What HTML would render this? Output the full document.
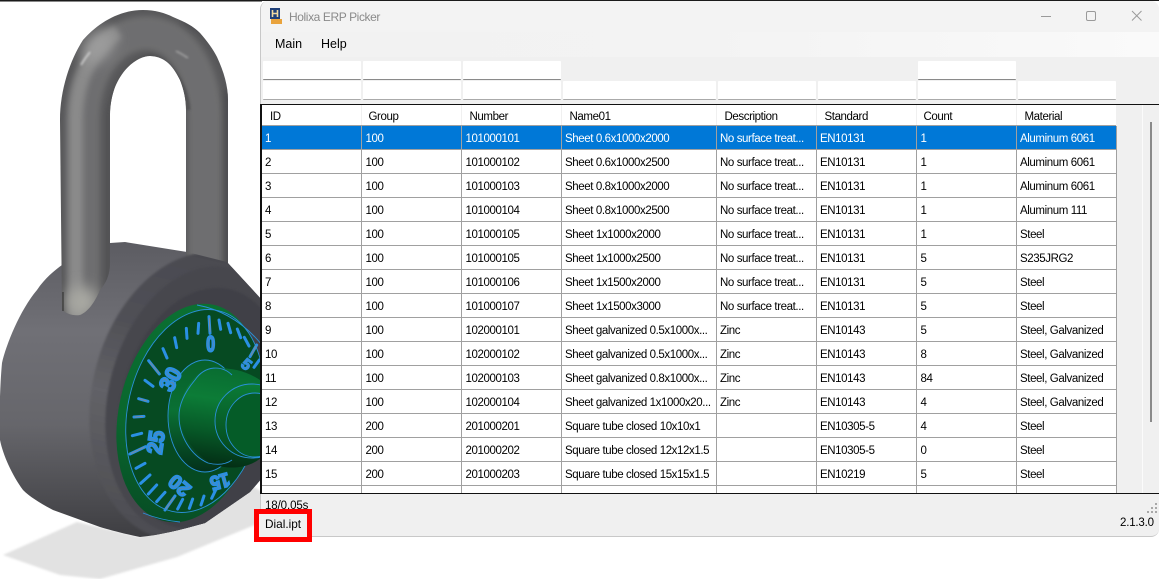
<!DOCTYPE html>
<html><head><meta charset="utf-8">
<style>
html,body{margin:0;padding:0;background:#fff}
#p{position:relative;width:1159px;height:579px;overflow:hidden;background:#fff;font-family:"Liberation Sans",sans-serif;font-size:12px;color:#000}
.a{position:absolute}
.f{position:absolute;background:#fff;height:18px;border-bottom:1px solid #8a8a8a;border-radius:1px}
.f2{border-bottom-color:#aaa}
table{position:absolute;left:261px;top:105px;width:855px;border-collapse:collapse;table-layout:fixed;font-size:11.5px;letter-spacing:-.4px}
td,th{height:21px;padding:2px 0 0 4px;border-right:1px solid #a0a0a0;border-bottom:1px solid #a0a0a0;white-space:nowrap;overflow:hidden;text-align:left;font-weight:normal;box-sizing:content-box}
td:nth-child(4),td:nth-child(5),td:nth-child(6){padding-left:3.5px}
td:nth-child(8){padding-left:3.5px}
th{height:16px;padding-top:4px;border-color:#f0f0f0;border-bottom-color:#a0a0a0}
tr.s td{background:#0078d7;color:#fff}
</style></head><body><div id="p">
<svg class="a" style="left:0;top:0" width="262" height="579" viewBox="0 0 262 579">
<defs>
<clipPath id="sc"><path d="M62,310 L60,120 C60,90 70,60 83,40 C97,24 118,10 143,10 C155,10 165,13 173,17 C185,22 193,26 200,33 C207,41 213,49 217,57 C224,72 228,86 228,100 L228,270 L186,270 L186,110 C186,100 184,90 180,80 C176,72 172,66 167,62 C162,58 156,56 150,56 C143,56 135,60 128,67 C122,73 118,80 115,87 C112,95 110,105 110,115 L110,262 C110,275 106,283 100,290 C95,302 88,312 80,315 C73,316 67,314 62,310 Z"/></clipPath>
<clipPath id="bc"><path d="M37,290 C45,278 55,270 62,265 L110,243 L125,242 L187,252 L227,262 L262,300 L262,478 L250,492 L205,523 C180,530 160,535 140,537 C125,534 110,530 100,527 L53,510 C40,503 30,497 23,490 C12,475 3,455 0,440 C-1,415 0,385 2,363 C6,345 20,310 37,290 Z"/></clipPath>
<linearGradient id="bd" x1="0" x2="0" y1="0" y2="1"><stop offset="0" stop-color="#5c5c62"/><stop offset=".3" stop-color="#707076"/><stop offset=".62" stop-color="#66666b"/><stop offset="1" stop-color="#3e3e42"/></linearGradient>
<linearGradient id="rm" x1="0" x2="0" y1="0" y2="1"><stop offset="0" stop-color="#4a4a50"/><stop offset=".3" stop-color="#505056"/><stop offset=".55" stop-color="#626267"/><stop offset="1" stop-color="#4c4c51"/></linearGradient>
<linearGradient id="gr" x1="0" x2="0" y1="0" y2="1"><stop offset="0" stop-color="#0b7032"/><stop offset=".6" stop-color="#0a672e"/><stop offset="1" stop-color="#074e25"/></linearGradient>
<linearGradient id="ha" x1="0" x2="0" y1="0" y2="1"><stop offset="0" stop-color="#07602b"/><stop offset=".45" stop-color="#0a7034"/><stop offset="1" stop-color="#03301a"/></linearGradient>
<linearGradient id="hb" gradientUnits="userSpaceOnUse" x1="240" y1="365" x2="225" y2="470"><stop offset="0" stop-color="#086a30"/><stop offset=".35" stop-color="#0c7c37"/><stop offset=".65" stop-color="#075a28"/><stop offset="1" stop-color="#032a13"/></linearGradient>
<linearGradient id="hc" gradientUnits="userSpaceOnUse" x1="250" y1="383" x2="245" y2="460"><stop offset="0" stop-color="#0b7c37"/><stop offset="1" stop-color="#04461e"/></linearGradient>
<filter id="b1" x="-20%" y="-20%" width="140%" height="140%"><feGaussianBlur stdDeviation="1"/></filter>
<filter id="b3" x="-30%" y="-30%" width="160%" height="160%"><feGaussianBlur stdDeviation="3"/></filter>
<filter id="b6" x="-60%" y="-60%" width="220%" height="220%"><feGaussianBlur stdDeviation="7"/></filter>
</defs>
<!-- shadow -->
<path d="M3,555 L77,522 L140,537 L243,480 L262,492 L262,522 L177,557 L100,579 L60,575 Z" fill="#e2e2e2" filter="url(#b1)"/>
<!-- body back -->
<path d="M37,290 C45,278 55,270 62,265 L110,243 L125,242 L187,252 L227,262 L262,300 L262,478 L250,492 L205,523 C180,530 160,535 140,537 C125,534 110,530 100,527 L53,510 C40,503 30,497 23,490 C12,475 3,455 0,440 C-1,415 0,385 2,363 C6,345 20,310 37,290 Z" fill="url(#bd)"/>
<!-- shackle -->
<g clip-path="url(#sc)">
<rect x="50" y="0" width="190" height="330" fill="#58585a"/>
<path d="M83,330 L83,120 C83,70 112,33 146,33 C180,33 205,70 205,120 L205,280" fill="none" stroke="#6e6e6f" stroke-width="34" filter="url(#b3)"/>
<path d="M76,330 L76,120 C76,80 92,50 118,32" fill="none" stroke="#8a8a8a" stroke-width="14" filter="url(#b3)"/>
<ellipse cx="98" cy="46" rx="20" ry="13" transform="rotate(-48 98 46)" fill="#9c9c9c" filter="url(#b6)"/>
<path d="M108,330 L108,115 C112,85 130,60 150,56 C170,60 186,85 188,110" fill="none" stroke="#525254" stroke-width="5" filter="url(#b1)"/>
<path d="M228,90 L228,280 M225,60 C220,45 205,30 185,20" fill="none" stroke="#4a4a4d" stroke-width="6" filter="url(#b3)"/>
<path d="M198,110 L198,270" stroke="#767677" stroke-width="8" filter="url(#b3)"/>
<ellipse cx="82" cy="302" rx="16" ry="16" fill="#a8a8a2" filter="url(#b6)"/>
</g>
<path d="M81,65 Q85,58 90,52" stroke="#d8d8d8" stroke-width="1.500" fill="none" filter="url(#b1)"/>
<path d="M176,51 Q182,54 188,58" stroke="#a8a8a8" stroke-width="1.500" fill="none" filter="url(#b1)"/>
<path d="M63,292 L63,311" stroke="#2a2a2a" stroke-width="1"/>
<!-- face covers right leg -->
<g clip-path="url(#bc)">
<g transform="rotate(13 190 395)">
<ellipse cx="195" cy="395" rx="103" ry="146" fill="url(#rm)" filter="url(#b1)"/>
<ellipse cx="201" cy="398" rx="92" ry="136" fill="#47474d" filter="url(#b1)"/>
<ellipse cx="205" cy="405" rx="82" ry="122" fill="#414147" filter="url(#b1)"/>
</g>
</g>
<!-- dial -->
<ellipse cx="189" cy="413" rx="70" ry="111" transform="rotate(13 189 413)" fill="url(#gr)"/>
<ellipse cx="195" cy="411" rx="67" ry="103" transform="rotate(13 195 411)" fill="#064a22"/>
<ellipse cx="195" cy="411" rx="67" ry="103" transform="rotate(13 195 411)" fill="none" stroke="#2a90d8" stroke-width=".9"/>
<path d="M197,305 Q235,312 262,345 M143,513 Q160,520 180,522" fill="none" stroke="#2a90d8" stroke-width=".9"/>
<!-- hub -->
<ellipse cx="205" cy="416" rx="37" ry="56" fill="url(#ha)" stroke="#2a90d8" stroke-width=".9"/>
<path d="M215,368 C235,368 250,372 264,383 L264,455 C250,470 225,470 210,463 C190,450 179,430 179,415 C179,395 195,368 215,368 Z" fill="url(#hb)"/>
<path d="M232,375 C222,365 205,365 195,380 C184,393 179,405 179,416 C179,435 190,455 208,463 C216,465 225,465 232,460" fill="none" stroke="#2a90d8" stroke-width=".9"/>
<ellipse cx="252" cy="421" rx="37" ry="37" fill="url(#hc)" stroke="#2a90d8" stroke-width=".9"/>
<ellipse cx="255" cy="425" rx="29" ry="32" fill="#055c28" stroke="#2a90d8" stroke-width=".9"/>
<!-- ticks (zoom-space coordinates) -->
<g transform="translate(0,290) scale(.33333)" stroke="#2a90e4" stroke-width="9" stroke-linecap="round" fill="none">
<path d="M596,100L594,130M559,115L561,145M524,143L530,173M489,176L501,204M446,212L478,252M435,271L459,289M416,326L444,334M402,381L432,379M397,437L425,430M390,492L437,470M408,535L435,520M422,580L450,555M445,612L470,585M470,635L495,607M495,660L525,618M533,657L548,628M568,655L578,627M603,645L612,618M635,625L648,598M657,90L662,118M684,100L692,128M712,117L722,143M733,142L747,168M750,200L770,165M762,232L778,210M627,80L630,130"/>
<path d="M450,217L476,249M420,327L440,333M394,490L432,472M628,85L630,125M753,196L768,168M498,656L522,622M405,381L428,379" stroke="#7d8a96" stroke-width="3"/>
<g font-family="Liberation Sans,sans-serif" font-weight="bold" font-size="66" fill="#5f88a8" stroke="#2a90e4" stroke-width="6">
<text transform="translate(632,165) scale(.72,1)" text-anchor="middle" dominant-baseline="central">0</text>
<text transform="translate(512,268) rotate(-62) scale(.95,1)" text-anchor="middle" dominant-baseline="central">30</text>
<text transform="translate(468,457) rotate(-82) scale(.95,1)" text-anchor="middle" dominant-baseline="central">25</text>
<text transform="translate(540,585) rotate(-140) scale(.9,.9)" text-anchor="middle" dominant-baseline="central">20</text>
<text transform="translate(660,575) rotate(165) scale(.8,.9)" text-anchor="middle" dominant-baseline="central">15</text>
<text transform="translate(738,225) rotate(38) scale(.7,.7)" text-anchor="middle" dominant-baseline="central">5</text>
</g>
</g>
</svg>
<div class="a" style="left:0;top:0;width:1159px;height:1px;background:#1a1a1a"></div>
<div class="a" style="left:0;top:1px;width:262px;height:.5px;background:#888"></div>

<!-- window -->
<div class="a" style="left:260px;top:1px;width:899px;height:536px;background:#f0f0f0;border:1px solid #c8c8c8;border-right:0;border-top:0;border-radius:8px 8px 8px 8px;box-sizing:border-box;overflow:hidden">
<div class="a" style="left:0;top:0;width:899px;height:31px;background:#f3f3f3"></div>
<div class="a" style="left:0;top:31px;width:899px;height:25px;background:linear-gradient(90deg,#f2f2f2 0,#f3f3f3 50%,#fafafa 100%)"></div>
</div>
<!-- title icon -->
<svg class="a" style="left:269px;top:8px" width="14" height="16" viewBox="0 0 14 16"><rect x="1" y="0" width="10" height="11" fill="#1f3f78"/><path d="M3.500,2v7M8.500,2v7M3.500,5.500h5" stroke="#f2d9a0" stroke-width="1.600"/><rect x="2" y="11" width="11" height="5" fill="#e9a33c"/></svg>
<div class="a" style="left:289px;top:10px;font-size:12px;letter-spacing:-.4px;color:#8a8a8a;white-space:nowrap">Holixa ERP Picker</div>
<!-- window controls -->
<svg class="a" style="left:1030px;top:5px" width="125" height="22" viewBox="0 0 125 22" fill="none" stroke="#9a9a9a" stroke-width="1"><path d="M11,11.500h10"/><rect x="56.500" y="6.500" width="9" height="9" rx="1.500"/><path d="M102,6l9.500,9.500M111.500,6L102,15.500"/></svg>
<div class="a" style="left:275px;top:37px;font-size:12.500px;white-space:nowrap">Main</div>
<div class="a" style="left:321px;top:37px;font-size:12.500px;white-space:nowrap">Help</div>

<!-- filters -->
<div class="f" style="left:263px;top:61px;width:98px"></div>
<div class="f" style="left:363px;top:61px;width:98px"></div>
<div class="f" style="left:463px;top:61px;width:98px"></div>
<div class="f" style="left:918px;top:61px;width:98px"></div>
<div class="f f2" style="left:263px;top:81px;width:98px"></div>
<div class="f f2" style="left:363px;top:81px;width:98px"></div>
<div class="f f2" style="left:463px;top:81px;width:98px"></div>
<div class="f f2" style="left:563px;top:81px;width:153px"></div>
<div class="f f2" style="left:718px;top:81px;width:98px"></div>
<div class="f f2" style="left:818px;top:81px;width:98px"></div>
<div class="f f2" style="left:918px;top:81px;width:98px"></div>
<div class="f f2" style="left:1018px;top:81px;width:98px"></div>

<!-- grid area -->
<div class="a" style="left:260px;top:104px;width:899px;height:2px;border-top:1px solid #111;box-sizing:border-box"></div>
<div class="a" style="left:261px;top:105px;width:855px;height:388px;background:#fff"></div>
<div class="a" style="left:1142px;top:105px;width:1px;height:388px;background:#fbfbfb"></div>
<div class="a" style="left:1150px;top:122px;width:2px;height:300px;background:#8a8a8a"></div>
<div class="a" style="left:261px;top:105px;width:855px;height:388px;overflow:hidden">
<table style="left:0;top:0">
<colgroup><col style="width:100px"><col style="width:100px"><col style="width:100px"><col style="width:155px"><col style="width:100px"><col style="width:100px"><col style="width:100px"><col style="width:100px"></colgroup>
<tr><th style="padding-left:9px">ID</th><th style="padding-left:7px">Group</th><th style="padding-left:8px">Number</th><th style="padding-left:8px">Name01</th><th style="padding-left:8px">Description</th><th style="padding-left:8px">Standard</th><th style="padding-left:7px">Count</th><th style="padding-left:8px">Material</th></tr>
<tr class="s"><td>1</td><td>100</td><td>101000101</td><td>Sheet 0.6x1000x2000</td><td>No surface treat...</td><td>EN10131</td><td>1</td><td>Aluminum 6061</td></tr>
<tr><td>2</td><td>100</td><td>101000102</td><td>Sheet 0.6x1000x2500</td><td>No surface treat...</td><td>EN10131</td><td>1</td><td>Aluminum 6061</td></tr>
<tr><td>3</td><td>100</td><td>101000103</td><td>Sheet 0.8x1000x2000</td><td>No surface treat...</td><td>EN10131</td><td>1</td><td>Aluminum 6061</td></tr>
<tr><td>4</td><td>100</td><td>101000104</td><td>Sheet 0.8x1000x2500</td><td>No surface treat...</td><td>EN10131</td><td>1</td><td>Aluminum 111</td></tr>
<tr><td>5</td><td>100</td><td>101000105</td><td>Sheet 1x1000x2000</td><td>No surface treat...</td><td>EN10131</td><td>1</td><td>Steel</td></tr>
<tr><td>6</td><td>100</td><td>101000105</td><td>Sheet 1x1000x2500</td><td>No surface treat...</td><td>EN10131</td><td>5</td><td>S235JRG2</td></tr>
<tr><td>7</td><td>100</td><td>101000106</td><td>Sheet 1x1500x2000</td><td>No surface treat...</td><td>EN10131</td><td>5</td><td>Steel</td></tr>
<tr><td>8</td><td>100</td><td>101000107</td><td>Sheet 1x1500x3000</td><td>No surface treat...</td><td>EN10131</td><td>5</td><td>Steel</td></tr>
<tr><td>9</td><td>100</td><td>102000101</td><td>Sheet galvanized 0.5x1000x...</td><td>Zinc</td><td>EN10143</td><td>5</td><td>Steel, Galvanized</td></tr>
<tr><td>10</td><td>100</td><td>102000102</td><td>Sheet galvanized 0.5x1000x...</td><td>Zinc</td><td>EN10143</td><td>8</td><td>Steel, Galvanized</td></tr>
<tr><td>11</td><td>100</td><td>102000103</td><td>Sheet galvanized 0.8x1000x...</td><td>Zinc</td><td>EN10143</td><td>84</td><td>Steel, Galvanized</td></tr>
<tr><td>12</td><td>100</td><td>102000104</td><td>Sheet galvanized 1x1000x20...</td><td>Zinc</td><td>EN10143</td><td>4</td><td>Steel, Galvanized</td></tr>
<tr><td>13</td><td>200</td><td>201000201</td><td>Square tube closed 10x10x1</td><td></td><td>EN10305-5</td><td>4</td><td>Steel</td></tr>
<tr><td>14</td><td>200</td><td>201000202</td><td>Square tube closed 12x12x1.5</td><td></td><td>EN10305-5</td><td>0</td><td>Steel</td></tr>
<tr><td>15</td><td>200</td><td>201000203</td><td>Square tube closed 15x15x1.5</td><td></td><td>EN10219</td><td>5</td><td>Steel</td></tr>
<tr><td>&nbsp;</td><td></td><td></td><td></td><td></td><td></td><td></td><td></td></tr>
</table></div>
<div class="a" style="left:1116px;top:126px;width:1px;height:367px;background:#a0a0a0"></div>
<div class="a" style="left:260px;top:104px;width:2px;height:390px;background:#111"></div>
<div class="a" style="left:260px;top:493px;width:899px;height:1px;background:#111"></div>

<div class="a" style="left:265px;top:500px;font-size:11.500px;letter-spacing:-.1px;white-space:nowrap">18/0.05s</div>
<div class="a" style="left:1120px;top:517px;font-size:11.500px;white-space:nowrap;letter-spacing:-.2px">2.1.3.0</div>
<svg class="a" style="left:1147px;top:502px" width="12" height="12" fill="#a8a8a8"><rect x="8" y="1" width="2" height="2"/><rect x="4" y="5" width="2" height="2"/><rect x="8" y="5" width="2" height="2"/><rect x="0" y="9" width="2" height="2"/><rect x="4" y="9" width="2" height="2"/><rect x="8" y="9" width="2" height="2"/></svg>
<!-- red box -->
<div class="a" style="left:254px;top:509px;width:58px;height:33px;border:5px solid #f00;box-sizing:border-box;background:#f0f0f0"></div>
<div class="a" style="left:265px;top:517px;font-size:11.800px;white-space:nowrap">Dial.ipt</div>
</div></body></html>
